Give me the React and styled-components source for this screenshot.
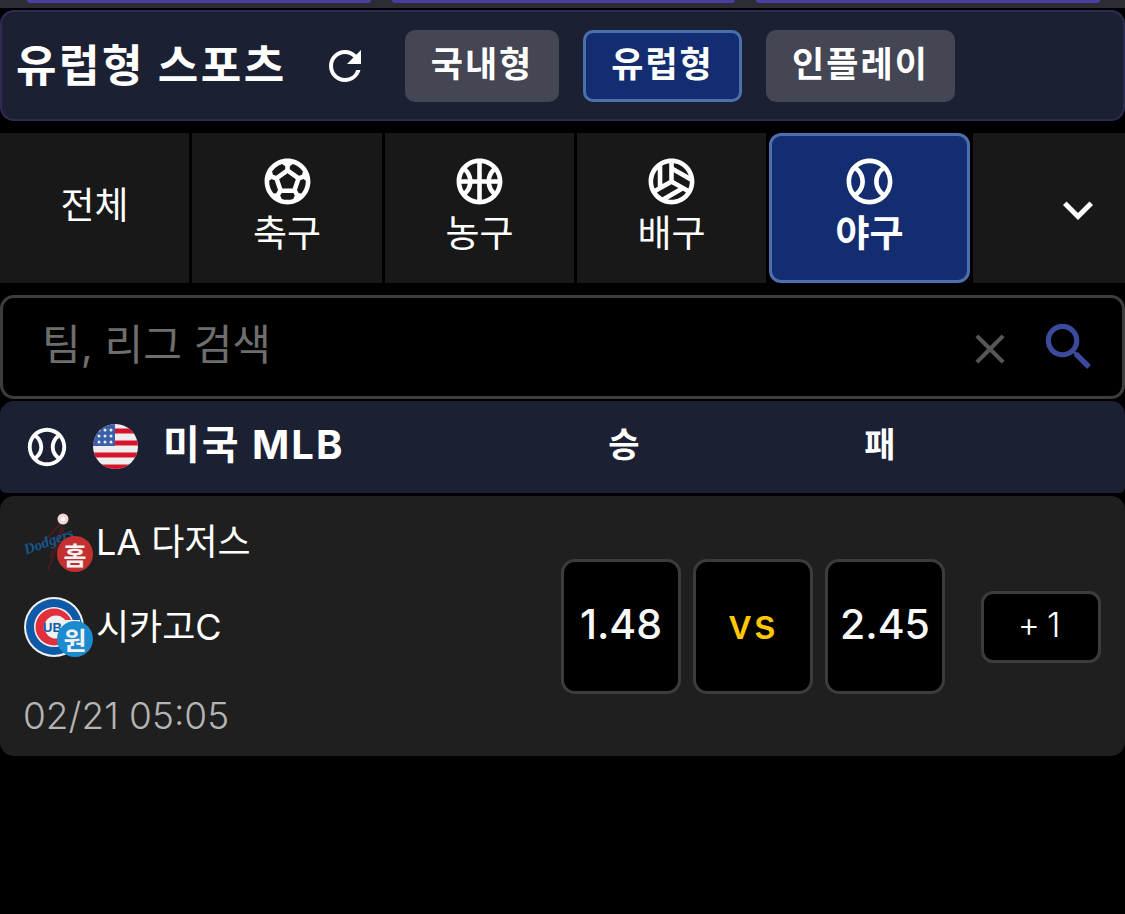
import React from 'react'
import styled, { createGlobalStyle } from 'styled-components'
import {
  MdRefresh,
  MdOutlineSportsSoccer,
  MdOutlineSportsBasketball,
  MdOutlineSportsVolleyball,
  MdOutlineSportsBaseball,
  MdExpandMore,
  MdClose,
  MdSearch,
} from 'react-icons/md'

const FONT = `Inter, "Noto Sans CJK KR", sans-serif`

const GlobalStyle = createGlobalStyle`
  html, body {
    margin: 0;
    background: #000;
    color: #fff;
    font-family: ${FONT};
  }
  * { box-sizing: border-box; }
`

const Page = styled.div`
  width: 1125px;
  height: 914px;
  overflow: hidden;
  background: #000;
`

const TopStrip = styled.div`
  height: 8px;
  padding: 0 25px 0 27px;
  display: flex;
  gap: 21px;
  background: #2c2c35;
`

const TopCard = styled.div`
  flex: 1;
  height: 3px;
  background: #4a3f9e;
  border-radius: 0 0 8px 8px;
`

const Header = styled.div`
  margin-top: 2px;
  height: 111px;
  padding: 0 0 0 14px;
  display: flex;
  align-items: center;
  background: #1c2033;
  border: 2px solid #2e2a52;
  border-radius: 14px;
`

const Title = styled.h1`
  margin: 0;
  width: 267px;
  font-size: 44px;
  font-weight: 700;
  letter-spacing: 2.5px;
  white-space: nowrap;
  line-height: 1;
`

const RefreshButton = styled.div`
  margin-left: 38px;
  width: 48px;
  height: 48px;
  display: flex;
  font-size: 48px;
`

const ModeTabs = styled.div`
  margin-left: 36px;
  display: flex;
  gap: 24px;
`

const ModeTab = styled.div`
  height: 72px;
  width: ${p => p.$width}px;
  display: flex;
  align-items: center;
  justify-content: center;
  padding-bottom: 8px;
  font-size: 35px;
  font-weight: 700;
  letter-spacing: 2px;
  border-radius: 10px;
  background: ${p => (p.$active ? '#142d70' : '#444654')};
  border: ${p => (p.$active ? '3px solid #4a70ae' : 'none')};
`

const SportRow = styled.div`
  margin-top: 12px;
  height: 150px;
  display: grid;
  grid-template-columns: 189px 190px 189px 189px 201px 1fr;
  gap: 3px;
`

const SportCell = styled.div`
  display: flex;
  flex-direction: column;
  align-items: center;
  justify-content: center;
  padding-bottom: ${p => (p.$plain ? 4 : 9)}px;
  background: ${p => (p.$active ? '#142d70' : '#181818')};
  border: ${p => (p.$active ? '3px solid #4a70ae' : 'none')};
  border-radius: ${p => (p.$active ? '12px' : '0')};
  font-size: 37px;
  font-weight: ${p => (p.$active ? 700 : 400)};
  line-height: 40px;
`

const SportIcon = styled.div`
  height: 55px;
  margin-bottom: 5px;
  font-size: 55px;
  line-height: 0;
`

const MoreCell = styled(SportCell)`
  align-items: flex-end;
  padding: 4px 17px 0 0;
  font-size: 60px;
`

const SearchBar = styled.div`
  margin-top: 12px;
  height: 104px;
  padding: 0 22px 0 39px;
  display: flex;
  align-items: center;
  background: #000;
  border: 3px solid #3d3d3d;
  border-radius: 14px;
`

const SearchPlaceholder = styled.div`
  flex: 1;
  padding-bottom: 12px;
  font-size: 42px;
  color: #6e6e6e;
`

const ClearIcon = styled.div`
  display: flex;
  font-size: 50px;
  color: #565656;
  margin: 3px 23px 0 0;
`

const SearchIcon = styled.div`
  display: flex;
  font-size: 62px;
  color: #3b4a9c;
`

const LeagueHeader = styled.div`
  margin-top: 2px;
  height: 92px;
  padding-left: 28px;
  display: flex;
  align-items: center;
  background: #1c2033;
  border-radius: 14px 14px 6px 6px;
`

const LeagueBall = styled.div`
  width: 38px;
  display: flex;
  justify-content: center;
  font-size: 46px;

  svg {
    flex-shrink: 0;
    width: 46px;
    height: 46px;
  }
`

const Flag = styled.svg`
  margin: 0 0 2px 27px;
  width: 45px;
  height: 45px;
  filter: blur(0.5px);
`

const LeagueName = styled.div`
  margin-left: 25px;
  width: 381px;
  padding-bottom: 10px;
  font-size: 40px;
  font-weight: 700;
  letter-spacing: 2px;
  white-space: nowrap;
`

const ColumnLabel = styled.div`
  width: ${p => p.$width}px;
  padding-bottom: 10px;
  text-align: center;
  font-size: 34px;
  font-weight: 700;
`

const MatchCard = styled.div`
  margin-top: 3px;
  height: 260px;
  padding: 16px 24px 0;
  display: flex;
  justify-content: space-between;
  background: #1f1f1f;
  border-radius: 14px;
`

const Teams = styled.div`
  display: flex;
  flex-direction: column;
`

const TeamRow = styled.div`
  height: 60px;
  margin-bottom: 25px;
  display: flex;
  align-items: center;
  font-size: 36px;
`

const TeamName = styled.span`
  margin: -6px 0 0 12px;
  white-space: nowrap;
`

const LogoBox = styled.div`
  position: relative;
  width: 60px;
  height: 60px;
`

const SideBadge = styled.span`
  position: absolute;
  right: -9px;
  bottom: 0;
  width: 36px;
  height: 36px;
  display: flex;
  align-items: center;
  justify-content: center;
  border-radius: 50%;
  background: ${p => p.$color};
  font-size: 25px;
  font-weight: 700;
  color: #f2f2f2;
`

const DateText = styled.div`
  margin: 11px 0 0 -1px;
  font-size: 37px;
  font-weight: 300;
  color: #b4b4b4;
  white-space: nowrap;
`

const OddsArea = styled.div`
  margin: 47px 0 0;
  display: flex;
  align-items: center;
  align-self: flex-start;
`

const OddsGroup = styled.div`
  display: flex;
  gap: 12px;
`

const OddsBox = styled.div`
  width: 120px;
  height: 135px;
  display: flex;
  align-items: center;
  justify-content: center;
  padding-bottom: 6px;
  background: #000;
  border: 3px solid #3c3c3c;
  border-radius: 14px;
  font-size: 41px;
  font-weight: 500;
  letter-spacing: ${p => (p.$vs ? '2px' : '0')};
  color: ${p => (p.$vs ? '#ffc800' : '#f8f8f8')};
`

const MoreBox = styled.div`
  margin-left: 36px;
  width: 120px;
  height: 72px;
  display: flex;
  align-items: center;
  justify-content: center;
  gap: 7px;
  padding: 0 4px 4px 0;
  background: #000;
  border: 3px solid #3c3c3c;
  border-radius: 12px;
  font-size: 34px;
  font-weight: 300;
`

const sports = [
  { name: '축구', icon: <MdOutlineSportsSoccer /> },
  { name: '농구', icon: <MdOutlineSportsBasketball /> },
  { name: '배구', icon: <MdOutlineSportsVolleyball /> },
  { name: '야구', icon: <MdOutlineSportsBaseball />, active: true },
]

const UsFlag = () => (
  <Flag viewBox="0 0 45 45">
    <defs>
      <clipPath id="flag-circle">
        <circle cx="22.5" cy="22.5" r="22.5" />
      </clipPath>
    </defs>
    <g clipPath="url(#flag-circle)">
      <rect width="45" height="45" fill="#eeeeee" />
      {[7, 19, 31, 43].map(y => (
        <rect key={y} x="0" y={y - 2.5} width="45" height="5" fill="#d8142c" />
      ))}
      <rect width="22" height="22" fill="#3b5fa8" />
      {[6, 12, 18].flatMap(y => [6, 12, 18].map(x => (
        <circle key={`${x}-${y}`} cx={x} cy={y} r="1.5" fill="#e8ecf8" />
      )))}
    </g>
  </Flag>
)

const DodgersLogo = () => (
  <svg width="60" height="60" viewBox="0 0 60 60" overflow="visible">
    <path d="M36 12 L16 34 M38 14 L26 46 M40 16 L24 58" stroke="#4a1c22" strokeWidth="2" fill="none" />
    <text
      x="2"
      y="42"
      fontFamily="Liberation Serif, serif"
      fontStyle="italic"
      fontWeight="700"
      fontSize="15"
      fill="#14588f"
      transform="rotate(-20 4 42)"
    >
      Dodgers
    </text>
    <circle cx="39" cy="7" r="5.5" fill="#f4d4d4" />
    <circle cx="39" cy="7" r="2.5" fill="#fdf2f2" />
  </svg>
)

const CubsLogo = () => (
  <svg width="60" height="60" viewBox="0 0 60 60">
    <circle cx="30" cy="30" r="30" fill="#f0f0f0" />
    <circle cx="30" cy="30" r="28" fill="#0e5aa8" />
    <circle cx="30" cy="30" r="20" fill="#f0f0f0" />
    <circle cx="30" cy="30" r="18.5" fill="#e0303c" />
    <circle cx="32" cy="30" r="11.5" fill="#f0f0f0" />
    <rect x="32" y="23" width="24" height="14" fill="#f0f0f0" />
    <text x="19" y="35" fontFamily="Liberation Sans, sans-serif" fontWeight="700" fontSize="13" fill="#0e5aa8">
      UB
    </text>
  </svg>
)

const App = () => (
  <Page>
    <GlobalStyle />
    <TopStrip>
      <TopCard />
      <TopCard />
      <TopCard />
    </TopStrip>
    <Header>
      <Title>유럽형 스포츠</Title>
      <RefreshButton>
        <MdRefresh />
      </RefreshButton>
      <ModeTabs>
        <ModeTab $width={154}>국내형</ModeTab>
        <ModeTab $width={159} $active>유럽형</ModeTab>
        <ModeTab $width={189}>인플레이</ModeTab>
      </ModeTabs>
    </Header>
    <SportRow>
      <SportCell $plain>전체</SportCell>
      {sports.map(sport => (
        <SportCell key={sport.name} $active={sport.active}>
          <SportIcon>{sport.icon}</SportIcon>
          {sport.name}
        </SportCell>
      ))}
      <MoreCell>
        <MdExpandMore />
      </MoreCell>
    </SportRow>
    <SearchBar>
      <SearchPlaceholder>팀, 리그 검색</SearchPlaceholder>
      <ClearIcon>
        <MdClose />
      </ClearIcon>
      <SearchIcon>
        <MdSearch />
      </SearchIcon>
    </SearchBar>
    <LeagueHeader>
      <LeagueBall>
        <MdOutlineSportsBaseball />
      </LeagueBall>
      <UsFlag />
      <LeagueName>미국 MLB</LeagueName>
      <ColumnLabel $width={160}>승</ColumnLabel>
      <ColumnLabel $width={352}>패</ColumnLabel>
    </LeagueHeader>
    <MatchCard>
      <Teams>
        <TeamRow>
          <LogoBox>
            <DodgersLogo />
            <SideBadge $color="#c42f2f">홈</SideBadge>
          </LogoBox>
          <TeamName>LA 다저스</TeamName>
        </TeamRow>
        <TeamRow>
          <LogoBox>
            <CubsLogo />
            <SideBadge $color="#1b8bd0">원</SideBadge>
          </LogoBox>
          <TeamName>시카고C</TeamName>
        </TeamRow>
        <DateText>02/21 05:05</DateText>
      </Teams>
      <OddsArea>
        <OddsGroup>
          <OddsBox>1.48</OddsBox>
          <OddsBox $vs>vs</OddsBox>
          <OddsBox>2.45</OddsBox>
        </OddsGroup>
        <MoreBox>
          <span>+</span>
          <span>1</span>
        </MoreBox>
      </OddsArea>
    </MatchCard>
  </Page>
)

export default App
